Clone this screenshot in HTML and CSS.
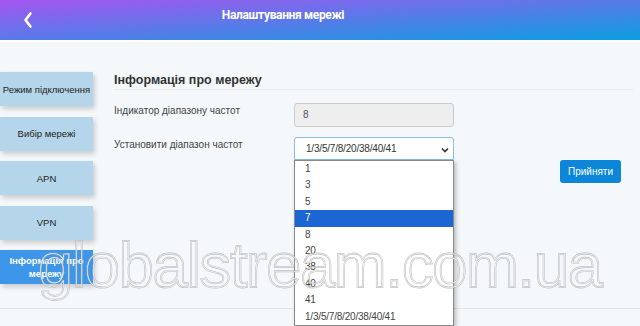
FILE: index.html
```html
<!DOCTYPE html>
<html lang="uk">
<head>
    <meta charset="UTF-8">
    <title>Налаштування мережі</title>
    <link rel="stylesheet" href="styles.css">
</head>
<body>
<div class="header">
    <a class="back" href="#">
        <svg width="12" height="18" viewBox="0 0 12 18"><polyline points="8.5,2.5 3.5,9 8.5,15.5" fill="none" stroke="#fff" stroke-width="2.6" stroke-linecap="round" stroke-linejoin="round"/></svg>
    </a>
    <h1 class="title">Налаштування мережі</h1>
</div>
<div class="page">
    <div class="side">
        <div class="tab">Режим підключення</div>
        <div class="tab">Вибір мережі</div>
        <div class="tab">APN</div>
        <div class="tab">VPN</div>
        <div class="tab active">Інформація про мережу</div>
    </div>
    <div class="content">
        <h2 class="section-title">Інформація про мережу</h2>
        <div class="row">
            <label>Індикатор діапазону частот</label>
            <div class="field readonly">8</div>
        </div>
        <div class="row">
            <label>Установити діапазон частот</label>
            <div class="select-wrap">
                <div class="field select">1/3/5/7/8/20/38/40/41
                    <svg class="arrow" width="8" height="6" viewBox="0 0 8 6"><polyline points="1,1.5 4,4.5 7,1.5" fill="none" stroke="#333" stroke-width="1.6"/></svg>
                </div>
                <ul class="options">
                    <li>1</li>
                    <li>3</li>
                    <li>5</li>
                    <li class="hover">7</li>
                    <li>8</li>
                    <li>20</li>
                    <li>38</li>
                    <li>40</li>
                    <li>41</li>
                    <li>1/3/5/7/8/20/38/40/41</li>
                </ul>
            </div>
        </div>
        <div class="actions">
            <button class="btn">Прийняти</button>
        </div>
    </div>
</div>
<div class="watermark" data-text="globalstream.com.ua">globalstream.com.ua</div>
</body>
</html>
```

FILE: styles.css
```css
body{margin: 0;padding: 0;background: #f4f8fb;font-family: "Liberation Sans", Arial, sans-serif;color: #333;overflow: hidden;height: 326px;position: relative;}
ul,li{list-style-type: none;margin: 0;padding: 0}
.header{
    height: 40px;
    background: linear-gradient(to bottom right, #a655f0, #0a9fe0);
    border-bottom: 2px solid #fff;
    display: flex;
    align-items: flex-start;
    position: relative;
}
.back{display: block;padding: 11px 0 0 22px;}
.title{
    margin: 0;
    position: absolute;
    left: 0;right: 74px;
    top: 8px;
    text-align: center;
    font-family: Roboto, "Liberation Sans", sans-serif;
    font-size: 12px;
    letter-spacing: -.35px;
    font-weight: bold;
    color: #fff;
}
.page{
    display: flex;
    padding: 30px 0 24px;
    border-bottom: 1px solid #e2e2e2;
}
.side{width: 93px;}
.tab{
    height: 34px;
    margin-bottom: 10.5px;
    background: #b5d6ea;
    box-shadow: 2px 3px 5px rgba(0,0,0,.18);
    display: flex;
    align-items: center;
    justify-content: center;
    text-align: center;
    font-size: 9.5px;
    color: #222;
    line-height: 13px;
}
.tab:last-child{margin-bottom: 0}
.tab.active{background: #3d96ea;color: #fff;font-weight: bold;padding: 0 6px;}
.content{flex: 1;margin: 0 7px 0 21px;}
.section-title{
    margin: 0 0 13px;
    height: 17px;
    line-height: 17px;
    font-size: 12.5px;
    color: #333;
    border-bottom: 1px solid #e6ecf0;
}
.row{display: flex;align-items: flex-start;margin-bottom: 10px;}
.row label{width: 180px;font-size: 10px;line-height: 16px;color: #444;}
.field{
    width: 160px;
    box-sizing: border-box;
    height: 24px;
    line-height: 22px;
    border: 1px solid #ccc;
    border-radius: 3px;
    padding-left: 8px;
    font-size: 10px;
    color: #555;
}
.readonly{background: #eee;}
.select-wrap{position: relative;}
.select{
    height: 23px;
    background: #fff;
    border-color: #8cbce6;
    border-radius: 3px 3px 0 0;
    padding-left: 11px;
    color: #333;
    letter-spacing: -.2px;
    position: relative;
}
.arrow{position: absolute;right: 4px;top: 9px;}
.options{
    position: absolute;
    top: 23px;
    left: 0;
    width: 160px;
    box-sizing: border-box;
    background: #fff;
    border: 1px solid #888;
    box-shadow: 2px 2px 4px rgba(0,0,0,.25);
    font-size: 10px;
    letter-spacing: -.2px;
    color: #444;
}
.options li{height: 16.4px;line-height: 16.4px;padding-left: 10px;}
.options li.hover{background: #1b66d2;color: #fff;}
.actions{display: flex;justify-content: flex-end;margin-top: -10px;padding-right: 12px;}
.btn{
    width: 61px;
    height: 23px;
    border: 0;
    border-radius: 3px;
    background: #0b86d9;
    color: #fff;
    font-family: "Liberation Sans", Arial, sans-serif;
    font-size: 10px;
    padding: 0;
}
.watermark,.watermark::after{
    position: absolute;
    left: 38px;
    top: 234px;
    font-family: "Liberation Sans", Arial, sans-serif;
    font-size: 63px;
    line-height: 63px;
    letter-spacing: -1.1px;
    color: transparent;
    -webkit-text-stroke: 1.8px rgba(170,170,170,.75);
    pointer-events: none;
    white-space: nowrap;
}
.watermark::after{
    content: attr(data-text);
    left: 0;top: 0;
    -webkit-text-stroke: .6px rgba(255,255,255,.9);
}
```
